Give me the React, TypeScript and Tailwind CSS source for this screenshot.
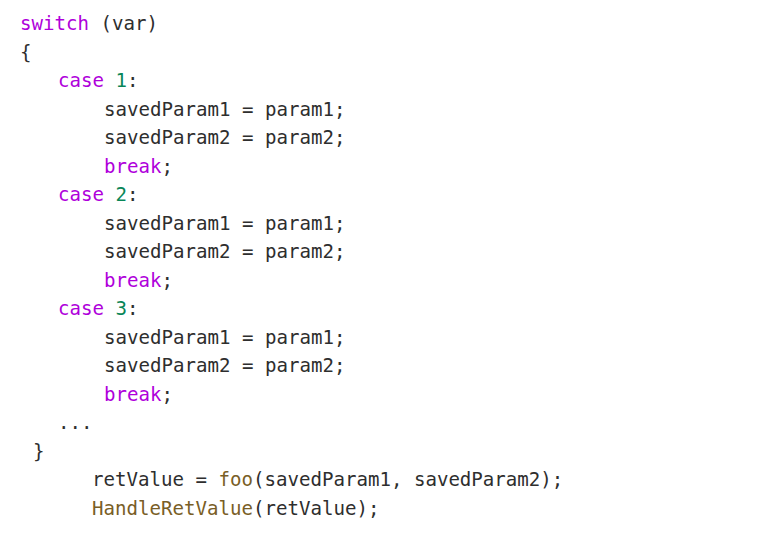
const kw = "text-[#af00db]";
const num = "text-[#098658]";
const fn = "text-[#795e26]";

function Line({ indent, children }: { indent: string; children: React.ReactNode }) {
  return <div className={`h-[28.5px] whitespace-pre ${indent}`}>{children}</div>;
}

function CaseBlock({ n }: { n: number }) {
  return (
    <>
      <Line indent="pl-[38px]">
        <span className={kw}>case</span> <span className={num}>{n}</span>:
      </Line>
      <Line indent="pl-[84px]">savedParam1 = param1;</Line>
      <Line indent="pl-[84px]">savedParam2 = param2;</Line>
      <Line indent="pl-[84px]">
        <span className={kw}>break</span>;
      </Line>
    </>
  );
}

export default function App() {
  return (
    <div className="w-[775px] h-[538px] bg-white">
      <div className="pt-[10px] pl-[20px] font-['DejaVu_Sans_Mono',monospace] text-[19.1px] leading-[28.5px] text-[#2e2e2e]">
        <Line indent="">
          <span className={kw}>switch</span> (var)
        </Line>
        <Line indent="">{"{"}</Line>
        <CaseBlock n={1} />
        <CaseBlock n={2} />
        <CaseBlock n={3} />
        <Line indent="pl-[38px]">...</Line>
        <Line indent="pl-[13px]">{"}"}</Line>
        <Line indent="pl-[72px]">
          retValue = <span className={fn}>foo</span>(savedParam1, savedParam2);
        </Line>
        <Line indent="pl-[72px]">
          <span className={fn}>HandleRetValue</span>(retValue);
        </Line>
      </div>
    </div>
  );
}
